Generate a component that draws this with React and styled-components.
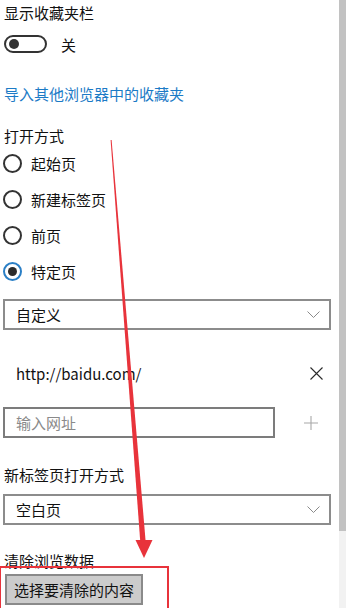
import * as React from "react"
import styled, { createGlobalStyle } from "styled-components"

const GlobalStyle = createGlobalStyle`
  html, body {
    margin: 0;
    padding: 0;
    background: #ffffff;
  }
  body {
    font-family: "Noto Sans CJK SC", "Noto Sans", sans-serif;
    font-size: 15px;
    color: #111111;
  }
`

const Page = styled.div`
  position: relative;
  display: flex;
  width: 353px;
  height: 608px;
  overflow: hidden;
  background: #ffffff;
`

const Content = styled.div`
  width: 335px;
  padding-left: 4px;
  display: flex;
  flex-direction: column;
`

const ScrollTrack = styled.div`
  width: 7px;
  background: #f2f2f2;
  display: flex;
  flex-direction: column;
`

const Thumb = styled.div`
  height: 531px;
  background: #c2c2c2;
`

const Label = styled.div`
  line-height: 20px;
  height: 20px;
  margin-top: ${(props) => props.top || 0}px;
  color: ${(props) => (props.link ? "#1c7bc6" : "#111111")};
  white-space: nowrap;
`

const ToggleRow = styled.div`
  display: flex;
  align-items: center;
  height: 18px;
  margin-top: 12px;
  gap: 14px;
`

const Toggle = styled.div`
  box-sizing: border-box;
  width: 43px;
  height: 18px;
  border: 2px solid #333333;
  border-radius: 9px;
  display: flex;
  align-items: center;
  padding-left: 3px;
`

const Knob = styled.span`
  width: 10px;
  height: 10px;
  border-radius: 50%;
  background: #333333;
`

const RadioGroup = styled.div`
  display: flex;
  flex-direction: column;
  margin-top: -1px;
`

const RadioRow = styled.div`
  display: flex;
  align-items: center;
  height: 36px;
  gap: 9px;
`

const RadioCircle = styled.span`
  box-sizing: border-box;
  width: 19px;
  height: 19px;
  border-radius: 50%;
  border: 2px solid ${(props) => (props.checked ? "#2a7fc6" : "#333333")};
  display: flex;
  align-items: center;
  justify-content: center;
  margin-left: -1px;
`

const Dot = styled.span`
  width: 9px;
  height: 9px;
  border-radius: 50%;
  background: #2b2b2b;
`

const Select = styled.div`
  box-sizing: border-box;
  width: 328px;
  height: 31px;
  margin-left: -1px;
  margin-top: ${(props) => props.top || 0}px;
  border: 2px solid #8c8c8c;
  display: flex;
  align-items: center;
  justify-content: space-between;
  padding: 0 9px 0 11px;
`

const UrlRow = styled.div`
  display: flex;
  align-items: center;
  justify-content: space-between;
  height: 30px;
  margin-top: 28px;
  padding: 0 16px 0 12px;
`

const InputRow = styled.div`
  display: flex;
  align-items: center;
  margin-top: 19px;
  height: 31px;
`

const Input = styled.div`
  box-sizing: border-box;
  width: 272px;
  height: 31px;
  margin-left: -1px;
  border: 2px solid #7c7c7c;
  display: flex;
  align-items: center;
  padding-left: 11px;
  color: #8a8a8a;
`

const PlusWrap = styled.div`
  margin-left: 28px;
  display: flex;
`

const Button = styled.div`
  box-sizing: border-box;
  width: 138px;
  height: 31px;
  margin-top: 3px;
  margin-left: 1px;
  background: #cccccc;
  border: 2px solid #8a8a8a;
  display: flex;
  align-items: center;
  padding-left: 7px;
  color: #111111;
  white-space: nowrap;
`

const Highlight = styled.div`
  position: absolute;
  left: -1px;
  top: 566px;
  width: 166px;
  height: 60px;
  border: 2px solid #e8333b;
`

const ArrowLayer = styled.svg`
  position: absolute;
  left: 0;
  top: 0;
  pointer-events: none;
`

const Chevron = () => (
  <svg width="13" height="7" viewBox="0 0 13 7">
    <path d="M0.5 0.5 L6.5 6.5 L12.5 0.5" fill="none" stroke="#8a8a8a" strokeWidth="1" />
  </svg>
)

const Cross = () => (
  <svg width="13" height="13" viewBox="0 0 13 13">
    <path d="M0.5 0.5 L12.5 12.5 M12.5 0.5 L0.5 12.5" fill="none" stroke="#2a2a2a" strokeWidth="1.1" />
  </svg>
)

const Plus = () => (
  <svg width="16" height="16" viewBox="0 0 16 16">
    <path d="M8 1 V15 M1 8 H15" fill="none" stroke="#a8a8a8" strokeWidth="1.1" />
  </svg>
)

const options = [
  { label: "起始页" },
  { label: "新建标签页" },
  { label: "前页" },
  { label: "特定页", checked: true },
]

export default function App() {
  return (
    <Page>
      <GlobalStyle />
      <Content>
        <Label top={3}>显示收藏夹栏</Label>
        <ToggleRow>
          <Toggle>
            <Knob />
          </Toggle>
          <span>关</span>
        </ToggleRow>
        <Label top={31} link>导入其他浏览器中的收藏夹</Label>
        <Label top={22}>打开方式</Label>
        <RadioGroup>
          {options.map((o) => (
            <RadioRow key={o.label}>
              <RadioCircle checked={o.checked}>{o.checked && <Dot />}</RadioCircle>
              <span>{o.label}</span>
            </RadioRow>
          ))}
        </RadioGroup>
        <Select top={10}>
          <span>自定义</span>
          <Chevron />
        </Select>
        <UrlRow>
          <span>http://baidu.com/</span>
          <Cross />
        </UrlRow>
        <InputRow>
          <Input>输入网址</Input>
          <PlusWrap>
            <Plus />
          </PlusWrap>
        </InputRow>
        <Label top={27}>新标签页打开方式</Label>
        <Select top={9}>
          <span>空白页</span>
          <Chevron />
        </Select>
        <Label top={26}>清除浏览数据</Label>
        <Button>选择要清除的内容</Button>
      </Content>
      <ScrollTrack>
        <Thumb />
      </ScrollTrack>
      <Highlight />
      <ArrowLayer width="353" height="608" viewBox="0 0 353 608">
        <polygon points="110.6,140 111.6,140 145.6,541 140.2,541" fill="#e8333b" />
        <polygon points="135.5,540 152.5,540 144,558" fill="#e8333b" />
      </ArrowLayer>
    </Page>
  )
}
